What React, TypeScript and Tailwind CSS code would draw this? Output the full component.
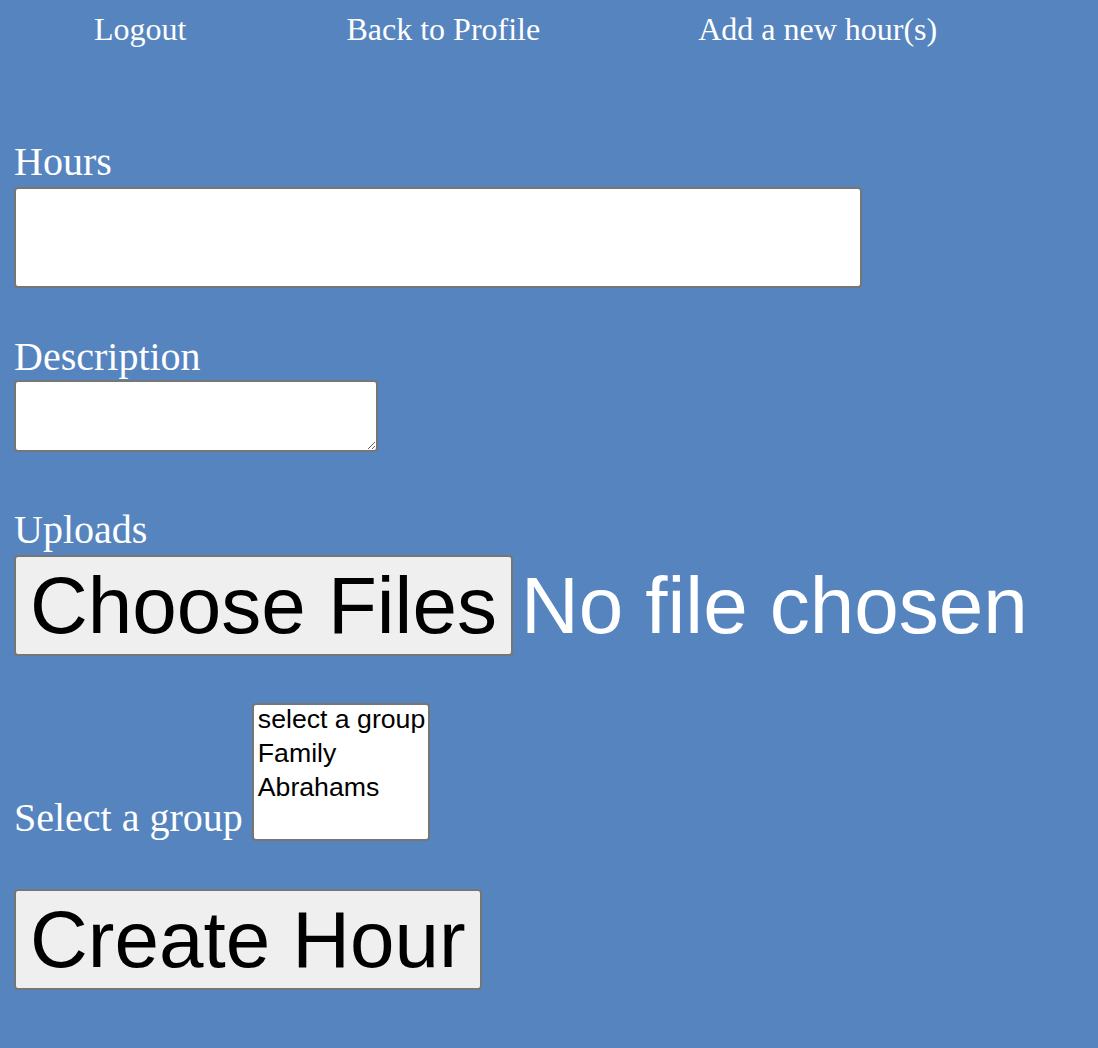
import React from "react";

const serif = "font-['Liberation_Serif','Times_New_Roman',serif]";
const sans = "font-['Liberation_Sans',Arial,sans-serif]";

export default function App() {
  const groups = ["select a group", "Family", "Abrahams"];

  return (
    <div className={`min-h-[1048px] w-full bg-[#5584bf] text-white ${serif}`}>
      {/* Top nav */}
      <nav className="flex pl-[94px] pt-[11px] text-[32px] leading-[37px]">
        <a href="#" className="text-white">Logout</a>
        <a href="#" className="ml-[160px] text-white">Back to Profile</a>
        <a href="#" className="ml-[158px] text-white">Add a new hour(s)</a>
      </nav>

      <form className="mt-[91px] px-[14px] flex flex-col items-start">
        {/* Hours */}
        <label className="block text-[40px] leading-[46px]">Hours</label>
        <input
          type="text"
          className="mt-[2px] block w-[848px] h-[101px] bg-white border-2 border-[#767676] rounded-[4px] outline-none"
        />

        {/* Description */}
        <label className="mt-[46px] block text-[40px] leading-[46px]">Description</label>
        <textarea className="block w-[364px] h-[72px] bg-white border-2 border-[#767676] rounded-[4px] outline-none" />

        {/* Uploads */}
        <label className="mt-[55px] block text-[40px] leading-[46px]">Uploads</label>
        <div className={`mt-[2px] flex items-center ${sans}`}>
          <button
            type="button"
            className="h-[101px] px-[14px] pt-[1px] bg-[#efefef] border-2 border-[#767676] rounded-[4px] text-black text-[80px] leading-[92px]"
          >
            Choose Files
          </button>
          <span className="ml-[8px] text-[80px] leading-[92px] text-white">No file chosen</span>
        </div>

        {/* Group select */}
        <div className="mt-[47px] flex items-end">
          <label className="text-[40px] leading-[46px] mr-[9px]">Select a group</label>
          <div className={`w-[178px] h-[138px] bg-white border-2 border-[#767676] rounded-[4px] px-[4px] text-black text-[26.67px] ${sans}`}>
            {groups.map((g) => (
              <div key={g} className="leading-[28px] pb-[6px] whitespace-nowrap">
                {g}
              </div>
            ))}
          </div>
        </div>

        {/* Submit */}
        <button
          type="submit"
          className={`mt-[48px] h-[101px] px-[14px] pt-[1px] bg-[#efefef] border-2 border-[#767676] rounded-[4px] text-black text-[80px] leading-[92px] ${sans}`}
        >
          Create Hour
        </button>
      </form>
    </div>
  );
}
